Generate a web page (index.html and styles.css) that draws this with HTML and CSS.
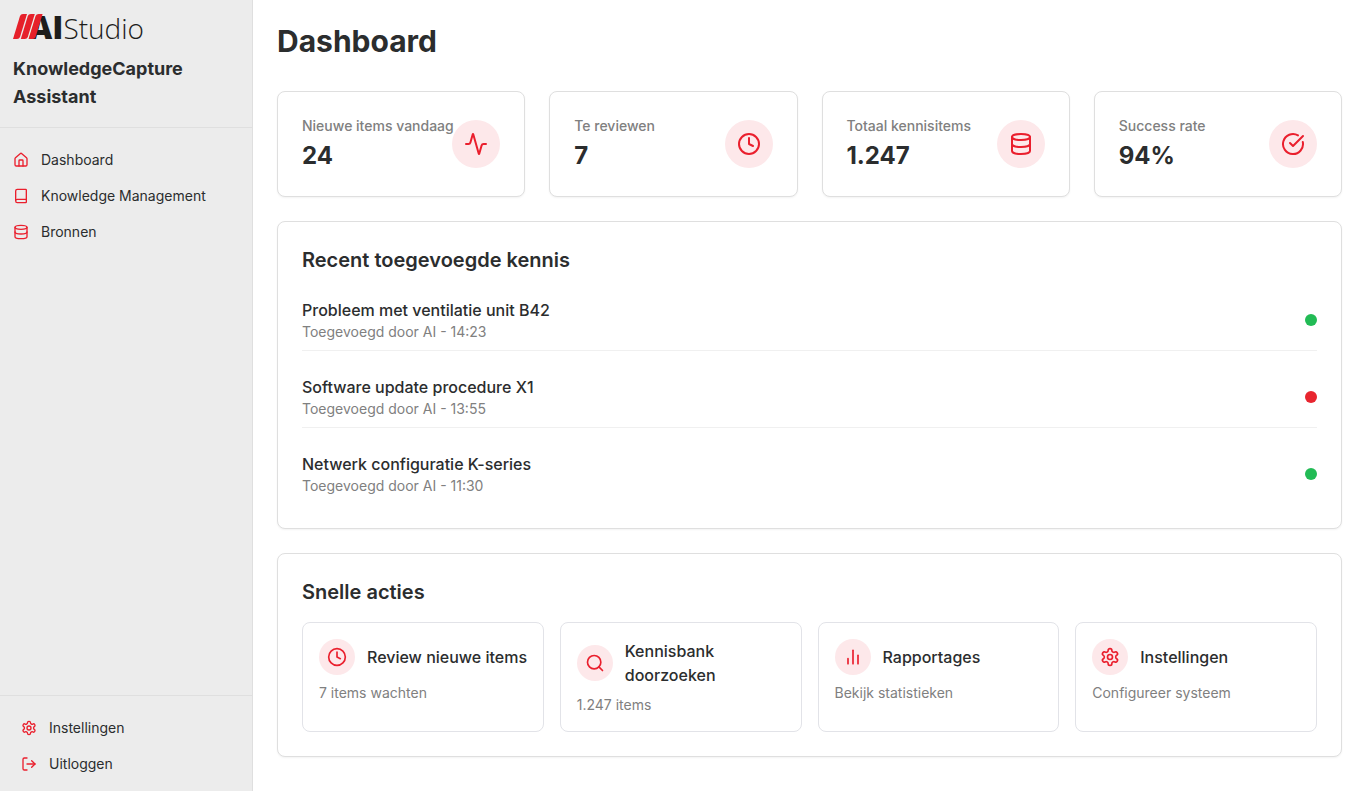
FILE: index.html
```
<!DOCTYPE html>
<html lang="nl">
<head>
    <meta charset="UTF-8">
    <meta name="viewport" content="width=device-width, initial-scale=1">
    <title>Dashboard</title>
    <link rel="stylesheet" href="styles.css">
</head>
<body>
    <!-- shared icons -->
    <svg class="sprite" aria-hidden="true">
        <symbol id="home" viewBox="0 0 24 24">
            <path d="M15 21v-8a1 1 0 0 0-1-1h-4a1 1 0 0 0-1 1v8"/>
            <path d="M3 10a2 2 0 0 1 .709-1.528l7-6a2 2 0 0 1 2.582 0l7 6A2 2 0 0 1 21 10v9a2 2 0 0 1-2 2H5a2 2 0 0 1-2-2z"/>
        </symbol>
        <symbol id="book" viewBox="0 0 24 24">
            <path d="M4 19.5v-15A2.5 2.5 0 0 1 6.5 2H19a1 1 0 0 1 1 1v18a1 1 0 0 1-1 1H6.5a1 1 0 0 1 0-5H20"/>
        </symbol>
        <symbol id="database" viewBox="0 0 24 24">
            <ellipse cx="12" cy="5" rx="9" ry="3"/>
            <path d="M3 5v14a9 3 0 0 0 18 0V5"/>
            <path d="M3 12a9 3 0 0 0 18 0"/>
        </symbol>
        <symbol id="settings" viewBox="0 0 24 24">
            <path d="M12.22 2h-.44a2 2 0 0 0-2 2v.18a2 2 0 0 1-1 1.73l-.43.25a2 2 0 0 1-2 0l-.15-.08a2 2 0 0 0-2.73.73l-.22.38a2 2 0 0 0 .73 2.73l.15.1a2 2 0 0 1 1 1.72v.51a2 2 0 0 1-1 1.74l-.15.09a2 2 0 0 0-.73 2.73l.22.38a2 2 0 0 0 2.73.73l.15-.08a2 2 0 0 1 2 0l.43.25a2 2 0 0 1 1 1.73V20a2 2 0 0 0 2 2h.44a2 2 0 0 0 2-2v-.18a2 2 0 0 1 1-1.73l.43-.25a2 2 0 0 1 2 0l.15.08a2 2 0 0 0 2.73-.73l.22-.39a2 2 0 0 0-.73-2.73l-.15-.08a2 2 0 0 1-1-1.74v-.5a2 2 0 0 1 1-1.74l.15-.09a2 2 0 0 0 .73-2.73l-.22-.38a2 2 0 0 0-2.73-.73l-.15.08a2 2 0 0 1-2 0l-.43-.25a2 2 0 0 1-1-1.73V4a2 2 0 0 0-2-2z"/>
            <circle cx="12" cy="12" r="3"/>
        </symbol>
        <symbol id="logout" viewBox="0 0 24 24">
            <path d="M9 21H5a2 2 0 0 1-2-2V5a2 2 0 0 1 2-2h4"/>
            <path d="m16 17 5-5-5-5"/>
            <path d="M21 12H9"/>
        </symbol>
        <symbol id="activity" viewBox="0 0 24 24">
            <path d="M22 12h-2.48a2 2 0 0 0-1.93 1.46l-2.35 8.36a.25.25 0 0 1-.48 0L9.24 2.18a.25.25 0 0 0-.48 0l-2.35 8.36A2 2 0 0 1 4.49 12H2"/>
        </symbol>
        <symbol id="clock" viewBox="0 0 24 24">
            <circle cx="12" cy="12" r="10"/>
            <path d="M12 6v6l4 2"/>
        </symbol>
        <symbol id="check" viewBox="0 0 24 24">
            <path d="M21.801 10A10 10 0 1 1 17 3.335"/>
            <path d="m9 11 3 3L22 4"/>
        </symbol>
        <symbol id="search" viewBox="0 0 24 24">
            <circle cx="11" cy="11" r="8"/>
            <path d="m21 21-4.3-4.3"/>
        </symbol>
        <symbol id="chart" viewBox="0 0 24 24">
            <path d="M18 20V10"/>
            <path d="M12 20V4"/>
            <path d="M6 20v-6"/>
        </symbol>
    </svg>

    <div class="layout">
        <aside class="sidebar">
            <div class="brand">
                <div class="logo">
                    <svg class="logo-bars" viewBox="0 0 30 25" aria-hidden="true">
                        <path d="M0 25 7 2q.7-2 3-2h4L7 23q-.7 2-3 2z"/>
                        <path d="M7.800 25l7-23q.7-2 3-2h4l-7 23q-.7 2-3 2z"/>
                        <path d="M15.600 25l7-23q.7-2 3-2h4l-7 23q-.7 2-3 2z"/>
                    </svg>
                    <span class="logo-ai">AI</span><span class="logo-studio">Studio</span>
                </div>
                <p class="brand-name">KnowledgeCapture Assistant</p>
            </div>
            <nav class="menu">
                <a class="menu-link" href="#"><svg class="icon icon-sm"><use href="#home"/></svg>Dashboard</a>
                <a class="menu-link" href="#"><svg class="icon icon-sm"><use href="#book"/></svg>Knowledge Management</a>
                <a class="menu-link" href="#"><svg class="icon icon-sm"><use href="#database"/></svg>Bronnen</a>
            </nav>
            <div class="menu menu-bottom">
                <a class="menu-link" href="#"><svg class="icon icon-sm"><use href="#settings"/></svg>Instellingen</a>
                <a class="menu-link" href="#"><svg class="icon icon-sm"><use href="#logout"/></svg>Uitloggen</a>
            </div>
        </aside>

        <main class="content">
            <h1 class="page-title">Dashboard</h1>

            <section class="stats">
                <div class="card stat">
                    <div class="stat-info">
                        <p class="stat-label">Nieuwe items vandaag</p>
                        <p class="stat-value">24</p>
                    </div>
                    <span class="badge badge-lg"><svg class="icon icon-lg"><use href="#activity"/></svg></span>
                </div>
                <div class="card stat">
                    <div class="stat-info">
                        <p class="stat-label">Te reviewen</p>
                        <p class="stat-value">7</p>
                    </div>
                    <span class="badge badge-lg"><svg class="icon icon-lg"><use href="#clock"/></svg></span>
                </div>
                <div class="card stat">
                    <div class="stat-info">
                        <p class="stat-label">Totaal kennisitems</p>
                        <p class="stat-value">1.247</p>
                    </div>
                    <span class="badge badge-lg"><svg class="icon icon-lg"><use href="#database"/></svg></span>
                </div>
                <div class="card stat">
                    <div class="stat-info">
                        <p class="stat-label">Success rate</p>
                        <p class="stat-value">94%</p>
                    </div>
                    <span class="badge badge-lg"><svg class="icon icon-lg"><use href="#check"/></svg></span>
                </div>
            </section>

            <section class="card">
                <h2 class="card-title recent-title">Recent toegevoegde kennis</h2>
                <ul class="recent">
                    <li class="recent-item">
                        <div>
                            <h3 class="item-title">Probleem met ventilatie unit B42</h3>
                            <p class="item-text">Toegevoegd door AI - 14:23</p>
                        </div>
                        <span class="dot dot-green"></span>
                    </li>
                    <li class="recent-item">
                        <div>
                            <h3 class="item-title">Software update procedure X1</h3>
                            <p class="item-text">Toegevoegd door AI - 13:55</p>
                        </div>
                        <span class="dot dot-red"></span>
                    </li>
                    <li class="recent-item">
                        <div>
                            <h3 class="item-title">Netwerk configuratie K-series</h3>
                            <p class="item-text">Toegevoegd door AI - 11:30</p>
                        </div>
                        <span class="dot dot-green"></span>
                    </li>
                </ul>
            </section>

            <section class="card">
                <h2 class="card-title">Snelle acties</h2>
                <div class="actions">
                    <button class="action" type="button">
                        <span class="action-head">
                            <span class="badge"><svg class="icon"><use href="#clock"/></svg></span>
                            <span class="item-title">Review&nbsp;nieuwe&nbsp;items</span>
                        </span>
                        <span class="item-text">7 items wachten</span>
                    </button>
                    <button class="action" type="button">
                        <span class="action-head">
                            <span class="badge"><svg class="icon"><use href="#search"/></svg></span>
                            <span class="item-title">Kennisbank doorzoeken</span>
                        </span>
                        <span class="item-text">1.247 items</span>
                    </button>
                    <button class="action" type="button">
                        <span class="action-head">
                            <span class="badge"><svg class="icon"><use href="#chart"/></svg></span>
                            <span class="item-title">Rapportages</span>
                        </span>
                        <span class="item-text">Bekijk statistieken</span>
                    </button>
                    <button class="action" type="button">
                        <span class="action-head">
                            <span class="badge"><svg class="icon"><use href="#settings"/></svg></span>
                            <span class="item-title">Instellingen</span>
                        </span>
                        <span class="item-text">Configureer systeem</span>
                    </button>
                </div>
            </section>
        </main>
    </div>
</body>
</html>
```
FILE: styles.css
```
*{
    box-sizing: border-box;
    margin: 0;
    padding: 0;
}
body{
    font-family: Inter, "Liberation Sans", sans-serif;
    font-size: 14px;
    line-height: 20px;
    color: #2b2d2e;
    background: #fff;
}
.sprite{
    display: none;
}
.layout{
    display: flex;
    min-height: 100vh;
}

/* sidebar */
.sidebar{
    display: flex;
    flex-direction: column;
    flex: 0 0 253px;
    background: #ececec;
    border-right: 1px solid #dfdfdf;
}
.brand{
    padding: 12px 13px 16px;
    border-bottom: 1px solid #dfdfdf;
}
.logo{
    display: flex;
    align-items: baseline;
    height: 30px;
    margin-bottom: 13px;
    color: #1d1d1b;
    font-family: "Open Sans", sans-serif;
    line-height: 30px;
}
/* the bars lie over the left leg of the A */
.logo-bars{
    flex: none;
    width: 30px;
    height: 25px;
    margin-right: -14px;
    fill: #e6202a;
    z-index: 1;
}
.logo-ai{
    font-size: 32px;
    font-weight: 800;
}
.logo-studio{
    font-size: 28px;
    font-weight: 300;
}
.brand-name{
    font-size: 18px;
    line-height: 28px;
    font-weight: 700;
}
.menu{
    display: flex;
    flex-direction: column;
    gap: 4px;
    padding: 16px 13px;
}
.menu-bottom{
    margin-top: auto;
    padding: 16px 21px 11px;
    border-top: 1px solid #dfdfdf;
}
.menu-link{
    display: flex;
    align-items: center;
    gap: 12px;
    height: 32px;
    color: inherit;
    text-decoration: none;
}

/* icons */
.icon{
    flex: none;
    width: 20px;
    height: 20px;
    fill: none;
    stroke: #ea1f2d;
    stroke-width: 2;
    stroke-linecap: round;
    stroke-linejoin: round;
}
.icon-sm{
    width: 16px;
    height: 16px;
}
.icon-lg{
    width: 24px;
    height: 24px;
}
.badge{
    display: flex;
    align-items: center;
    justify-content: center;
    flex: none;
    width: 36px;
    height: 36px;
    border-radius: 50%;
    background: #fde8ea;
}
.badge-lg{
    width: 48px;
    height: 48px;
}

/* content */
.content{
    display: flex;
    flex-direction: column;
    gap: 24px;
    flex: 1;
    min-width: 0;
    padding: 23px 20px 24px 24px;
}
.page-title{
    margin-bottom: 8px;
    font-size: 30px;
    line-height: 36px;
    font-weight: 700;
}
.card{
    padding: 24px;
    border: 1px solid #dfdfdf;
    border-radius: 8px;
    background: #fff;
    box-shadow: 0 1px 2px rgba(0, 0, 0, 0.05);
}
.card-title{
    margin-bottom: 16px;
    font-size: 20px;
    line-height: 28px;
    font-weight: 600;
}
.stats{
    display: grid;
    grid-template-columns: repeat(4, minmax(0, 1fr));
    gap: 24px;
}
.stat{
    display: flex;
    align-items: center;
    justify-content: space-between;
}
.stat-info{
    min-width: 0;
}
.stat-label{
    margin-bottom: 4px;
    color: #808080;
    font-weight: 500;
    white-space: nowrap;
}
.stat-value{
    font-size: 24px;
    line-height: 32px;
    font-weight: 700;
}
.recent-title{
    margin-bottom: 24px;
}
.recent{
    display: flex;
    flex-direction: column;
    gap: 24px;
    list-style: none;
}
.recent-item{
    display: flex;
    align-items: center;
    justify-content: space-between;
    padding-bottom: 8px;
    border-bottom: 1px solid #f0f0f0;
}
.recent-item:last-child{
    border-bottom: none;
}
.item-title{
    font-size: 16px;
    line-height: 24px;
    font-weight: 500;
}
.item-text{
    color: #808080;
}
.dot{
    width: 12px;
    height: 12px;
    border-radius: 50%;
}
.dot-green{
    background: #22bb55;
}
.dot-red{
    background: #e8252f;
}
.actions{
    display: grid;
    grid-template-columns: repeat(4, minmax(0, 1fr));
    gap: 16px;
}
.action{
    display: flex;
    flex-direction: column;
    justify-content: flex-start;
    gap: 8px;
    padding: 16px;
    border: 1px solid #e2e3e8;
    border-radius: 8px;
    background: #fff;
    color: inherit;
    font: inherit;
    text-align: left;
    cursor: pointer;
}
.action-head{
    display: flex;
    align-items: center;
    gap: 12px;
}
```
